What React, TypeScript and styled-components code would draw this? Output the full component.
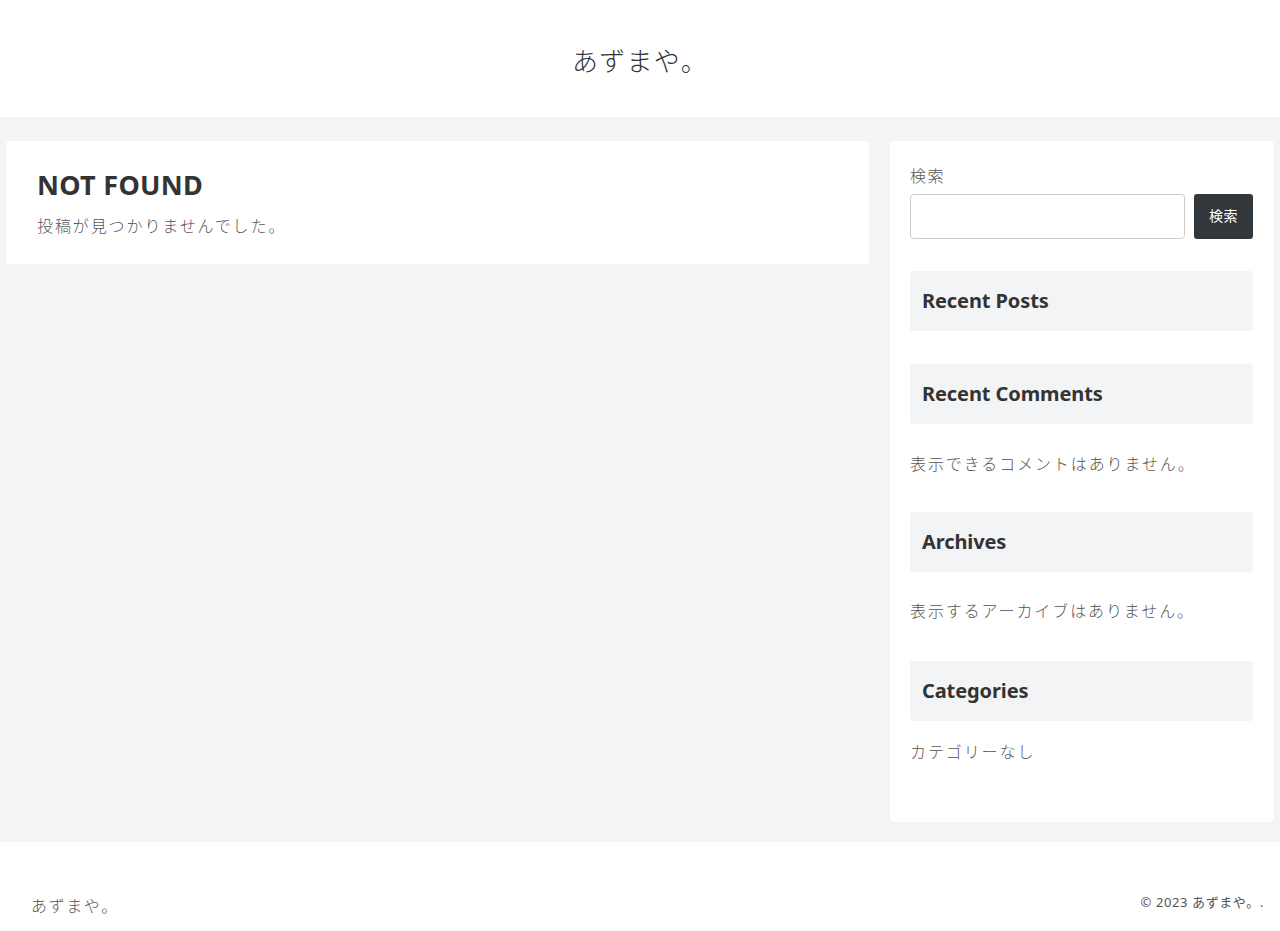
import React from "react";
import styled, { createGlobalStyle } from "styled-components";

const Global = createGlobalStyle`
  html, body { margin: 0; padding: 0; }
  body {
    font-family: "Noto Sans", "Noto Sans CJK JP", sans-serif;
    color: #555;
    background: #fff;
  }
  * { box-sizing: border-box; }
`;

const Header = styled.header`
  height: 117px;
  display: flex;
  align-items: center;
  justify-content: center;
  background: #fff;
`;

const SiteTitle = styled.h1`
  margin: 0;
  font-size: 26px;
  font-weight: 300;
  color: #333;
  line-height: 1;
  padding-top: 2px;
  letter-spacing: 1.3px;
  font-family: "Noto Sans CJK JP", sans-serif;
`;

const Body = styled.div`
  background: #f3f4f6;
  padding: 24px 6px 20px 6px;
  display: grid;
  grid-template-columns: 863px 384px;
  column-gap: 21px;
  align-items: start;
`;

const Card = styled.main`
  background: #fff;
  border-radius: 4px;
  padding: 26px 31px 26px;
`;

const Title = styled.h2`
  margin: 0;
  font-size: 27px;
  font-weight: 700;
  color: #333;
  line-height: 36px;
  letter-spacing: 0.3px;
`;

const Text = styled.p<{ $mt?: number }>`
  margin: ${(p) => p.$mt ?? 0}px 0 0;
  font-size: 16px;
  font-weight: 300;
  line-height: 26px;
  color: #555;
  letter-spacing: 1.9px;
  font-family: "Noto Sans CJK JP", sans-serif;
`;

const Sidebar = styled.aside`
  background: #fff;
  border-radius: 4px;
  padding: 21px 21px 58px 20px;
  display: flex;
  flex-direction: column;
`;

const Label = styled.label`
  font-size: 16px;
  font-weight: 300;
  line-height: 26px;
  color: #555;
  letter-spacing: 1.5px;
  font-family: "Noto Sans CJK JP", sans-serif;
  margin-bottom: 6px;
`;

const SearchRow = styled.div`
  display: flex;
  gap: 9px;
`;

const Input = styled.input`
  flex: 1;
  height: 45px;
  border: 1px solid #ccc;
  border-radius: 4px;
  font-size: 16px;
`;

const Button = styled.button`
  width: 59px;
  height: 45px;
  padding: 0 0 4px;
  background: #32373c;
  color: #fff;
  border: none;
  border-radius: 3px;
  font-size: 14px;
  letter-spacing: 0.5px;
  font-family: "Noto Sans CJK JP", sans-serif;
`;

const WidgetTitle = styled.h3<{ $mt: number }>`
  margin: ${(p) => p.$mt}px 0 0;
  height: 60px;
  background: #f3f4f6;
  border-radius: 3px;
  display: flex;
  align-items: center;
  padding: 0 12px 2px;
  font-size: 20px;
  font-weight: 700;
  color: #333;
  letter-spacing: -0.1px;
`;

const Footer = styled.footer`
  height: 89px;
  background: #fff;
  display: flex;
  justify-content: space-between;
  align-items: flex-end;
  padding: 0 16px 12px 31px;
  font-family: "Noto Sans CJK JP", sans-serif;
`;

const FooterName = styled.div`
  font-size: 16px;
  font-weight: 300;
  line-height: 26px;
  color: #555;
  letter-spacing: 1.6px;
  margin-bottom: 1px;
`;

const Copy = styled.div`
  font-size: 13px;
  line-height: 20px;
  color: #555;
  margin-bottom: 7px;
  letter-spacing: 0.6px;
  font-family: "Noto Sans", "Noto Sans CJK JP", sans-serif;
`;

export default function App() {
  return (
    <>
      <Global />
      <Header>
        <SiteTitle>あずまや。</SiteTitle>
      </Header>
      <Body>
        <Card>
          <Title>NOT FOUND</Title>
          <Text $mt={9}>投稿が見つかりませんでした。</Text>
        </Card>
        <Sidebar>
          <Label>検索</Label>
          <SearchRow>
            <Input type="text" />
            <Button>検索</Button>
          </SearchRow>
          <WidgetTitle $mt={32}>Recent Posts</WidgetTitle>
          <WidgetTitle $mt={33}>Recent Comments</WidgetTitle>
          <Text $mt={26}>表示できるコメントはありません。</Text>
          <WidgetTitle $mt={36}>Archives</WidgetTitle>
          <Text $mt={25}>表示するアーカイブはありません。</Text>
          <WidgetTitle $mt={38}>Categories</WidgetTitle>
          <Text $mt={17}>カテゴリーなし</Text>
        </Sidebar>
      </Body>
      <Footer>
        <FooterName>あずまや。</FooterName>
        <Copy>© 2023 あずまや。.</Copy>
      </Footer>
    </>
  );
}
